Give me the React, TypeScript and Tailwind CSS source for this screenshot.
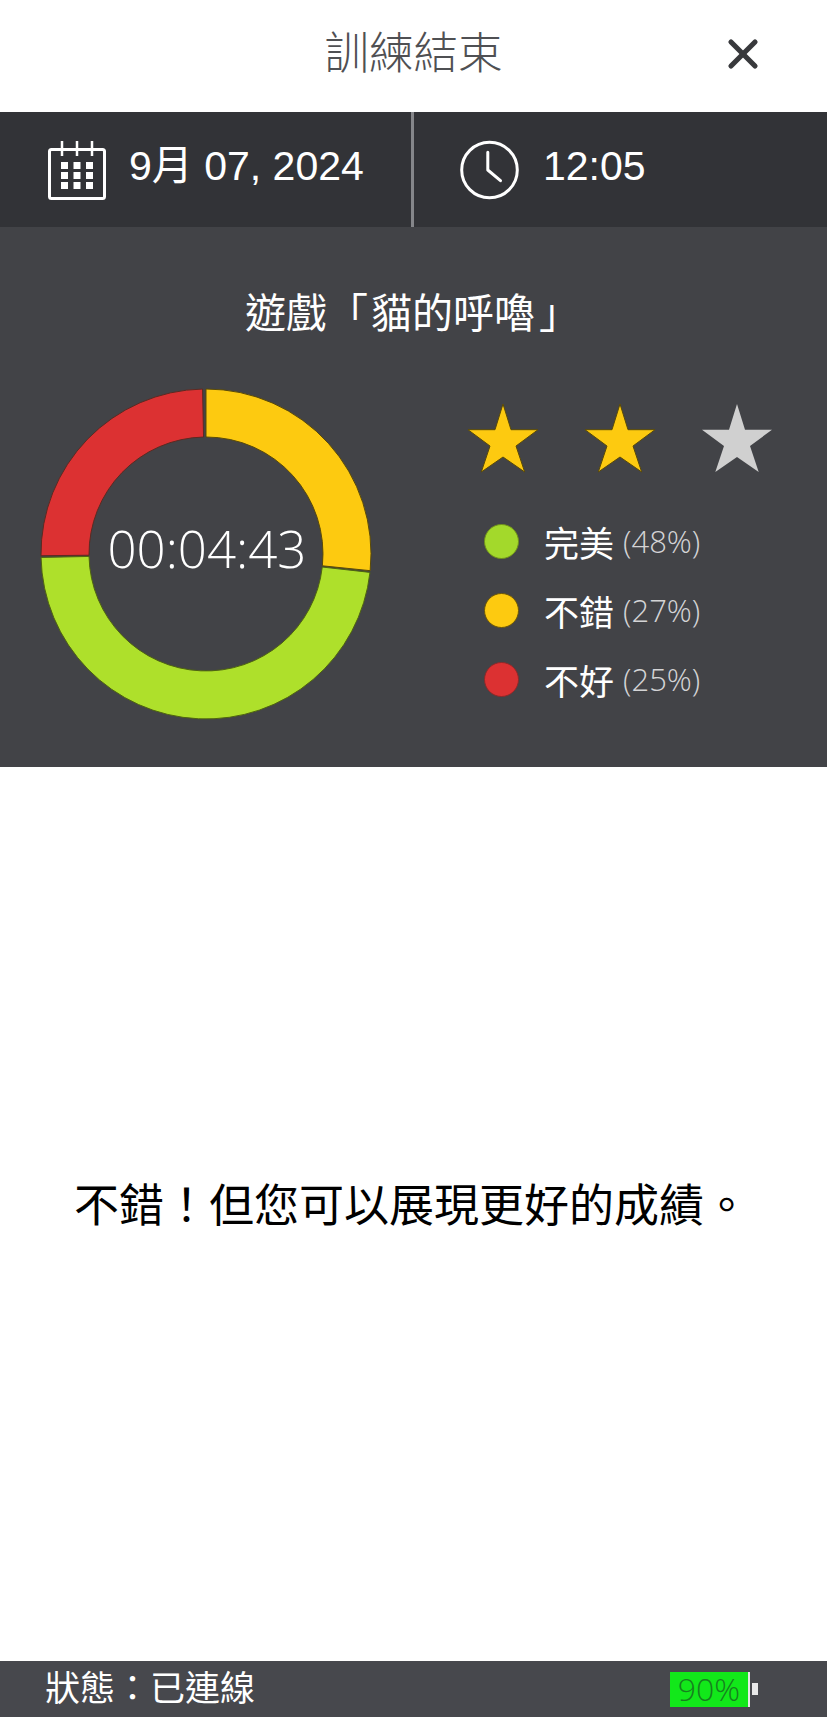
import { X } from "lucide-react";

const cjk = "font-['Liberation_Sans','Noto_Sans_CJK_TC',sans-serif]";
const cjkOnly = "font-['Noto_Sans_CJK_TC',sans-serif]";
const light = "font-['Open_Sans','Noto_Sans_CJK_TC',sans-serif] font-light";

function polar(r: number, deg: number) {
  const a = ((deg - 90) * Math.PI) / 180;
  return `${(170 + r * Math.cos(a)).toFixed(2)} ${(170 + r * Math.sin(a)).toFixed(2)}`;
}

// one ring slice, angles measured clockwise from 12 o'clock
function slicePath(from: number, to: number) {
  const big = to - from > 180 ? 1 : 0;
  return `M${polar(165, from)} A165 165 0 ${big} 1 ${polar(165, to)} L${polar(117, to)} A117 117 0 ${big} 0 ${polar(117, from)} Z`;
}

function Donut() {
  return (
    <div className="relative h-[340px] w-[340px]">
      <svg width="340" height="340" viewBox="0 0 340 340">
        <path d={slicePath(0, 95.8)} fill="#fdca10" stroke="#5a4a08" strokeWidth="1" />
        <path d={slicePath(96.4, 268.8)} fill="#aee02b" stroke="#4f6410" strokeWidth="1" />
        <path d={slicePath(269.4, 358.8)} fill="#dc3132" stroke="#5c2a22" strokeWidth="1" />
      </svg>
      <div className={`${light} absolute inset-0 flex items-center justify-center pb-[11px] pl-[2px] text-[51px] text-white`}>
        00:04:43
      </div>
    </div>
  );
}

function Star({ on }: { on: boolean }) {
  return (
    <svg width="72" height="70" viewBox="-1 -1 72 70">
      <polygon
        points="35,0 43,25.7 70,25.7 48,42 56.7,68 35,53 13.3,68 22,42 0,25.7 27,25.7"
        fill={on ? "#fdca10" : "#d0d0d0"}
        stroke={on ? "#5a4a08" : "none"}
        strokeWidth="1"
      />
    </svg>
  );
}

function LegendRow({ color, edge, label, pct }: { color: string; edge: string; label: string; pct: string }) {
  return (
    <div className="flex h-[69px] items-center">
      <span className={`h-[35px] w-[35px] rounded-full border ${color} ${edge}`} />
      <span className={`${cjkOnly} ml-[25px] text-[35px] leading-none text-white`}>{label}</span>
      <span className={`${light} ml-[9px] text-[31px] leading-none text-[#d4d4d6]`}>{pct}</span>
    </div>
  );
}

function CalendarIcon() {
  return (
    <svg width="58" height="60" viewBox="0 0 58 60" fill="none" stroke="#fff">
      <rect x="1.5" y="9.5" width="55" height="49" rx="2" strokeWidth="3" />
      <path d="M14 1v15M29 1v15M44 1v15" strokeWidth="2.5" />
      <g fill="#fff" stroke="none">
        <rect x="13" y="22" width="7" height="7" />
        <rect x="25.5" y="22" width="7" height="7" />
        <rect x="38" y="22" width="7" height="7" />
        <rect x="13" y="32" width="7" height="7" />
        <rect x="25.5" y="32" width="7" height="7" />
        <rect x="38" y="32" width="7" height="7" />
        <rect x="13" y="42" width="7" height="7" />
        <rect x="25.5" y="42" width="7" height="7" />
        <rect x="38" y="42" width="7" height="7" />
      </g>
    </svg>
  );
}

function ClockIcon() {
  return (
    <svg width="59" height="60" viewBox="0 0 59 60" fill="none" stroke="#fff">
      <circle cx="29.5" cy="30" r="27.8" strokeWidth="3" />
      <path d="M27.8 12.3V30L40.5 40.7" strokeWidth="3" strokeLinecap="round" strokeLinejoin="round" />
    </svg>
  );
}

export default function App() {
  return (
    <div className="flex h-[1717px] w-[827px] flex-col bg-white">
      {/* Title bar */}
      <div className="relative flex h-[112px] items-center justify-center">
        <h1 className={`${cjkOnly} pb-[12px] text-[44.5px] font-light leading-none text-[#4f5053]`}>訓練結束</h1>
        <button className="absolute right-[60px] top-[30px] text-[#38393c]">
          <X size={48} strokeWidth={2.6} />
        </button>
      </div>

      {/* Date and time */}
      <div className="flex h-[115px] bg-[#323337]">
        <div className="flex w-[411px] items-center pl-[48px]">
          <CalendarIcon />
          <span className={`${cjk} ml-[23px] pb-[7px] text-[41px] leading-none text-white`}>9月 07, 2024</span>
        </div>
        <div className="w-[3px] bg-[#85868a]" />
        <div className="flex flex-1 items-center pl-[46px]">
          <ClockIcon />
          <span className={`${cjk} ml-[24px] pb-[7px] text-[41px] leading-none text-white`}>12:05</span>
        </div>
      </div>

      {/* Results panel */}
      <div className="h-[540px] bg-[#424347]">
        <p className={`${cjkOnly} pt-[58px] pl-[245px] text-[41px] leading-[50px] text-white`}>
          遊戲「<span className="ml-[3px]">貓的呼嚕</span>
          <span className="ml-[4px]">」</span>
        </p>
        <div className="mt-[68px] flex">
          <div className="ml-[36px] mt-[-19px]">
            <Donut />
          </div>
          <div className="ml-[91px] flex flex-col">
            <div className="flex gap-[45px]">
              <Star on />
              <Star on />
              <Star on={false} />
            </div>
            <div className="mt-[34px] flex flex-col pl-[17px]">
              <LegendRow color="bg-[#a3d92b]" edge="border-[#6f8f1c]" label="完美" pct="(48%)" />
              <LegendRow color="bg-[#fdca10]" edge="border-[#6b5608]" label="不錯" pct="(27%)" />
              <LegendRow color="bg-[#dc3132]" edge="border-[#8a2a2a]" label="不好" pct="(25%)" />
            </div>
          </div>
        </div>
      </div>

      {/* Message */}
      <div className="flex flex-1 items-center justify-center pb-[24px] pr-[4px]">
        <p className={`${cjkOnly} text-[45px] leading-none text-black`}>{"不錯\uFF01但您可以展現更好的成績。"}</p>
      </div>

      {/* Status bar */}
      <div className="flex h-[56px] items-center justify-between bg-[#47484d] pl-[45px] pr-[69px]">
        <span className={`${cjkOnly} pb-[8px] text-[35px] leading-none text-white`}>{"狀態\uFF1A已連線"}</span>
        <div className="flex items-center">
          <div className={`${light} flex h-[35px] w-[80px] items-center justify-center border-r-2 border-[#e8e8e8] bg-[#12e81a] text-[32px] leading-none text-[#17801f]`}>
            90%
          </div>
          <div className="ml-[2px] h-[12px] w-[6px] bg-[#e8e8e8]" />
        </div>
      </div>
    </div>
  );
}
